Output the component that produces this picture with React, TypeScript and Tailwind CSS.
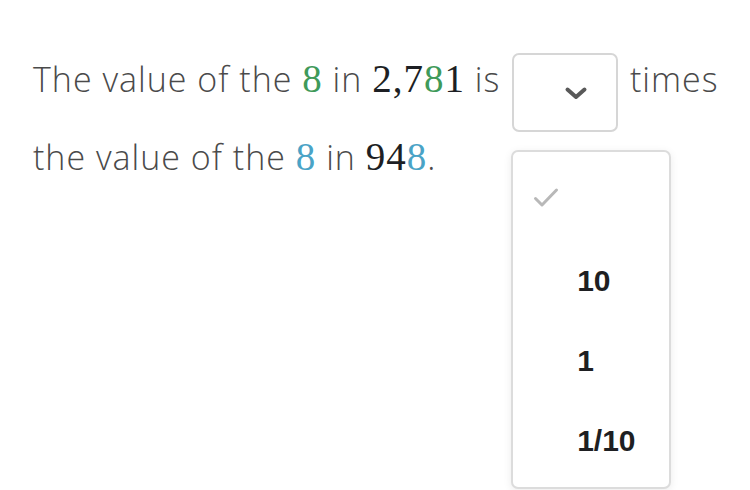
import React from "react";

function Chevron() {
  return (
    <svg width="24" height="14" viewBox="0 0 24 14" fill="none">
      <path d="M3.5 3.5 L12 11 L20.5 3.5" stroke="#595959" strokeWidth="4" strokeLinecap="round" strokeLinejoin="round" />
    </svg>
  );
}

function Check() {
  return (
    <svg width="26" height="22" viewBox="0 0 26 22" fill="none">
      <path d="M2.5 11.5 L9 18 L23.5 3" stroke="#b8b8b8" strokeWidth="3" strokeLinecap="round" strokeLinejoin="round" />
    </svg>
  );
}

const num = "font-['Liberation_Serif',serif] text-[39px] tracking-[1px]";

export default function App() {
  return (
    <div className="w-[750px] h-[490px] bg-white overflow-hidden font-['Open_Sans',sans-serif]">
      <div className="pl-[33px] pt-[40px]">
        <p className="text-[34px] font-light tracking-[1px] leading-[78px] text-[#4a4a4a] w-[705px]">
          The value of the <span className={num + " text-[#3f9a5a]"}>8</span> in{" "}
          <span className={num + " text-[#1d1f24]"}>
            2,7<span className="text-[#3f9a5a]">8</span>1
          </span>{" "}
          is{" "}
          <span className="relative inline-block align-[-20px] -my-[20px] w-[106px] h-[79px] mx-[2px] border-2 border-[#d6d6d6] rounded-[7px] bg-white">
            <span className="absolute left-[50px] top-[31px]">
              <Chevron />
            </span>
            <span className="absolute left-[-3px] top-[95px] w-[160px] h-[339px] border-2 border-[#dcdcdc] rounded-[7px] bg-white shadow-[0_2px_8px_rgba(0,0,0,0.08)] z-10 flex flex-col font-['Liberation_Sans',sans-serif] font-bold text-[30px] tracking-normal text-[#1e1f22] leading-none">
              <span className="h-[89px] flex items-start pl-[20px] pt-[35px]">
                <Check />
              </span>
              <span className="h-[80px] flex items-center pl-[64px]">10</span>
              <span className="h-[80px] flex items-center pl-[64px]">1</span>
              <span className="h-[80px] flex items-center pl-[64px]">1/10</span>
            </span>
          </span>{" "}
          times the value of the <span className={num + " text-[#4aa3c6]"}>8</span> in{" "}
          <span className={num + " text-[#1d1f24]"}>
            94<span className="text-[#4aa3c6]">8</span>
          </span>
          .
        </p>
      </div>
    </div>
  );
}
